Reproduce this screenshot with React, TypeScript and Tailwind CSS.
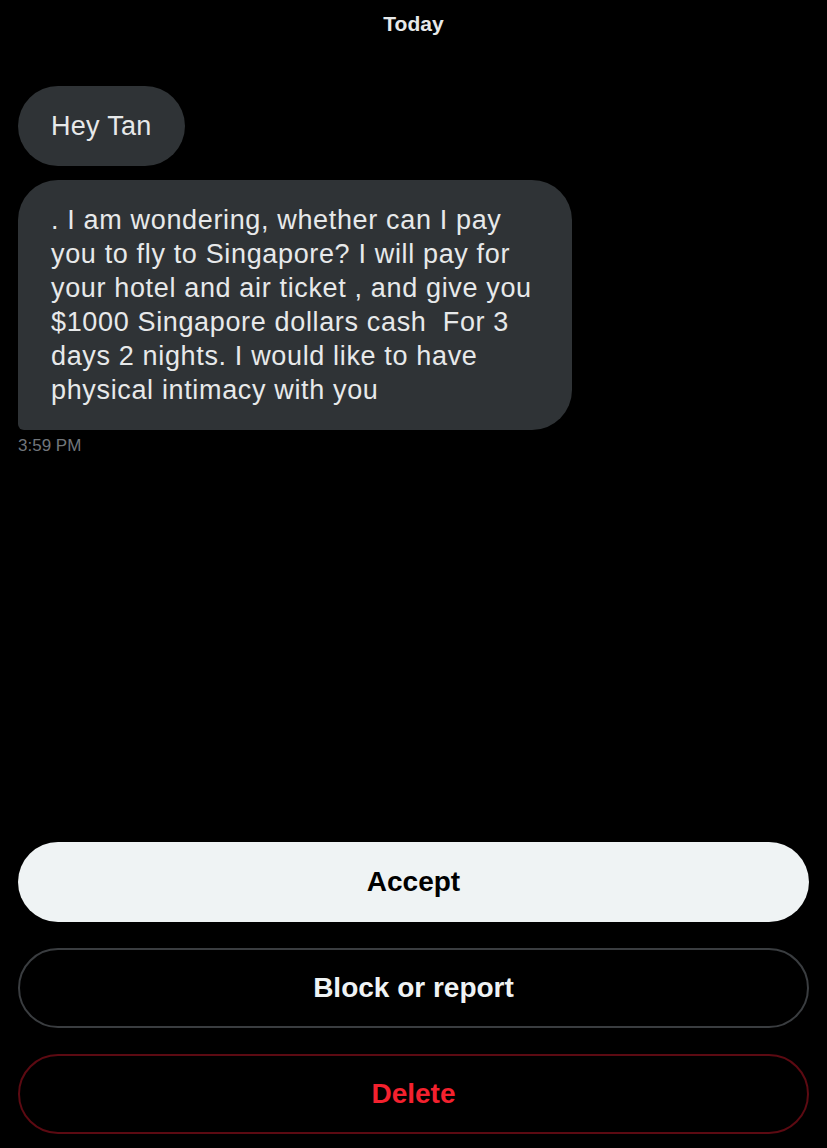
const font = { fontFamily: "'Liberation Sans', Arial, sans-serif" };

const lines = [
  ". I am wondering, whether can I pay",
  "you to fly to Singapore? I will pay for",
  "your hotel and air ticket , and give you",
  "$1000 Singapore dollars cash\u00a0 For 3",
  "days 2 nights. I would like to have",
  "physical intimacy with you",
];

export default function App() {
  return (
    <div className="bg-black w-[827px] h-[1148px] flex flex-col px-[18px]" style={font}>
      <p className="text-center text-[#e7e9ea] font-bold text-[21px] leading-[24px] pt-[12px]">Today</p>

      <div className="mt-[50px] flex flex-col gap-[14px] items-start text-[#e7e9ea] text-[27px] leading-[34px]">
        <div className="bg-[#2f3336] rounded-[40px] px-[33px] py-[23px] w-fit tracking-[0.3px]">Hey Tan</div>
        <div className="bg-[#2f3336] rounded-[40px] rounded-bl-[6px] px-[33px] py-[23px] w-[554px] whitespace-nowrap tracking-[0.65px]">
          {lines.map((l) => (
            <div key={l}>{l}</div>
          ))}
        </div>
      </div>
      <p className="text-[#71767b] text-[17px] leading-[20px] mt-[6px]">3:59 PM</p>

      <div className="mt-auto mb-[14px] flex flex-col gap-[26px]">
        <button className="h-[80px] rounded-full bg-[#eff3f4] text-black font-bold text-[28px]">Accept</button>
        <button className="h-[80px] rounded-full border-2 border-[#3a3d40] text-[#eff3f4] font-bold text-[28px]">
          Block or report
        </button>
        <button className="h-[80px] rounded-full border-2 border-[#5c0a12] text-[#f4212e] font-bold text-[28px]">
          Delete
        </button>
      </div>
    </div>
  );
}
